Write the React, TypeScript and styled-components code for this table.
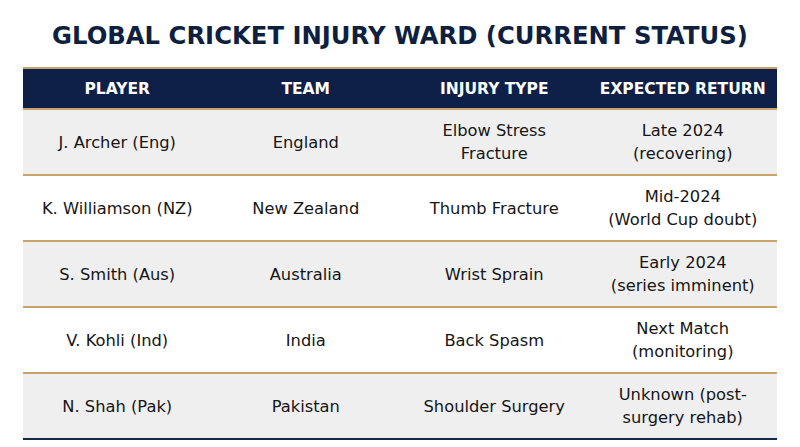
import styled, { createGlobalStyle } from 'styled-components';

const GlobalStyle = createGlobalStyle`
  html, body {
    margin: 0;
    padding: 0;
    background: #ffffff;
  }
  body {
    font-family: 'DejaVu Sans', 'Open Sans', sans-serif;
  }
`;

const Page = styled.div`
  width: 800px;
  height: 447px;
  box-sizing: border-box;
  padding: 20px 23px 0;
  display: flex;
  flex-direction: column;
  align-items: center;
`;

const Title = styled.h1`
  margin: 0 0 16px;
  font-size: 24.3px;
  font-weight: 700;
  color: #0f1f3f;
  line-height: 31px;
  white-space: nowrap;
`;

const Table = styled.table`
  width: 754px;
  border-collapse: collapse;
  table-layout: fixed;
  border-bottom: 2px solid #14264a;
`;

const HeadRow = styled.tr`
  background: #0e2048;
  border-top: 2px solid #c9a36b;
  border-bottom: 2px solid #c9a36b;
`;

const HeadCell = styled.th`
  height: 39px;
  padding: 0;
  font-size: 15.5px;
  font-weight: 600;
  color: #ffffff;
  text-align: center;
`;

const Row = styled.tr<{ $shaded: boolean }>`
  background: ${({ $shaded }) => ($shaded ? '#efefef' : '#ffffff')};
  border-bottom: 2px solid #c9a36b;
  &:last-child {
    border-bottom: none;
  }
`;

const Cell = styled.td`
  height: 64px;
  padding: 0 10px;
  font-size: 16.3px;
  line-height: 23px;
  color: #161616;
  text-align: center;
`;

const headers = ['PLAYER', 'TEAM', 'INJURY TYPE', 'EXPECTED RETURN'];

const rows = [
  ['J. Archer (Eng)', 'England', ['Elbow Stress', 'Fracture'], ['Late 2024', '(recovering)']],
  ['K. Williamson (NZ)', 'New Zealand', ['Thumb Fracture'], ['Mid-2024', '(World Cup doubt)']],
  ['S. Smith (Aus)', 'Australia', ['Wrist Sprain'], ['Early 2024', '(series imminent)']],
  ['V. Kohli (Ind)', 'India', ['Back Spasm'], ['Next Match', '(monitoring)']],
  ['N. Shah (Pak)', 'Pakistan', ['Shoulder Surgery'], ['Unknown (post-', 'surgery rehab)']],
] as const;

const Lines = ({ lines }: { lines: readonly string[] }) => (
  <>
    {lines.map((line, i) => (
      <span key={line}>
        {i > 0 && <br />}
        {line}
      </span>
    ))}
  </>
);

export default function App() {
  return (
    <Page>
      <GlobalStyle />
      <Title>GLOBAL CRICKET INJURY WARD (CURRENT STATUS)</Title>
      <Table>
        <thead>
          <HeadRow>
            {headers.map((h) => (
              <HeadCell key={h}>{h}</HeadCell>
            ))}
          </HeadRow>
        </thead>
        <tbody>
          {rows.map(([player, team, injury, ret], index) => (
            <Row key={player} $shaded={index % 2 === 0}>
              <Cell>{player}</Cell>
              <Cell>{team}</Cell>
              <Cell>
                <Lines lines={injury} />
              </Cell>
              <Cell>
                <Lines lines={ret} />
              </Cell>
            </Row>
          ))}
        </tbody>
      </Table>
    </Page>
  );
}
